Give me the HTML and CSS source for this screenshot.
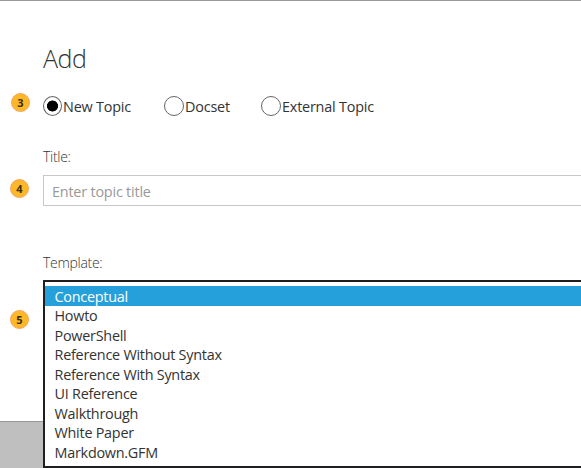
FILE: index.html
```html
<!DOCTYPE html>
<html lang="en">
<head>
<meta charset="utf-8">
<title>Add</title>
<link rel="stylesheet" href="styles.css">
</head>
<body>
<main class="dialog">
  <h1 class="heading">Add</h1>
  <div class="row row-type">
    <span class="badge badge-type">3</span>
    <div class="radios" role="radiogroup">
      <label class="radio radio-new"><span class="dot checked"></span><span class="caption">New Topic</span></label>
      <label class="radio radio-docset"><span class="dot"></span><span class="caption">Docset</span></label>
      <label class="radio"><span class="dot"></span><span class="caption">External Topic</span></label>
    </div>
  </div>
  <div class="label label-title">Title:</div>
  <div class="row row-title">
    <span class="badge">4</span>
    <input class="field" type="text" placeholder="Enter topic title">
  </div>
  <div class="label label-template">Template:</div>
  <div class="row row-template">
    <span class="badge badge-template">5</span>
    <ul class="menu">
      <li class="selected">Conceptual</li>
      <li>Howto</li>
      <li>PowerShell</li>
      <li>Reference Without Syntax</li>
      <li>Reference With Syntax</li>
      <li>UI Reference</li>
      <li>Walkthrough</li>
      <li>White Paper</li>
      <li>Markdown.GFM</li>
    </ul>
  </div>
  <footer class="footer"></footer>
</main>
</body>
</html>
```
FILE: styles.css
```css
* { box-sizing: border-box; }
body {
  margin: 0;
  background: #fff;
  color: #333;
  font: 14.4px/20px "Open Sans", "Noto Sans", sans-serif;
  letter-spacing: -0.25px;
  overflow: hidden;
}
.dialog {
  height: 468px;
  display: flex;
  flex-direction: column;
  border-top: 1px solid #999;
}
.heading {
  margin: 40px 0 1px 43px;
  font-size: 25px;
  line-height: 34px;
  font-weight: 300;
  letter-spacing: -0.5px;
}
.row {
  display: grid;
  grid-template-columns: 43px 1fr;
  position: relative;
}
.row-type { margin-top: 16px; height: 28px; }
.badge {
  width: 19px;
  height: 19px;
  margin: 4px 0 0 10px;
  border: 1px solid #fba35c;
  border-radius: 50%;
  background: #fdb827;
  color: #3a2f17;
  font-size: 11px;
  line-height: 17px;
  font-weight: 700;
  text-align: center;
  letter-spacing: 0;
}
.badge-type { margin: 1px 0 0 11px; }
.radios { display: flex; align-items: center; }
.radio { display: flex; align-items: center; gap: 1px; height: 20px; letter-spacing: -0.2px; }
.radio-new { width: 121px; }
.radio-docset { width: 97px; }
.caption { padding-top: 2px; }
.dot {
  width: 20px;
  height: 20px;
  border: 1px solid #666;
  border-radius: 50%;
}
.checked { width: 19px; background: radial-gradient(circle, #000 5.2px, #fff 5.8px); }
.label { margin-left: 43px; font-weight: 300; font-size: 14px; letter-spacing: -0.3px; }
.label-title { margin-top: 27px; }
.row-title { margin-top: 8px; }
.field {
  height: 31px;
  padding: 2px 8px 0;
  border: 1px solid #c8c8c8;
  border-right: 0;
  background: #fff;
  color: #333;
  font: inherit;
  letter-spacing: -0.2px;
  outline: 0;
}
.field::placeholder { color: #999; opacity: 1; }
.label-template { margin-top: 47px; }
.row-template { margin-top: 7px; height: 141px; }
.badge-template { margin-top: 30px; }
.menu {
  position: absolute;
  left: 43px;
  right: 0;
  top: 0;
  height: 188px;
  margin: 0;
  padding: 4px 0 0;
  list-style: none;
  background: #fff;
  border: 2px solid #1f1f21;
  border-right: 0;
}
.menu li { height: 19.5px; padding-left: 9.5px; line-height: 19.5px; }
.menu .selected { height: 20px; background: #26a0da; color: #fff; line-height: 21px; }
.footer { flex: 1; background: #bfbfbf; border-top: 1px solid #999; }
```
